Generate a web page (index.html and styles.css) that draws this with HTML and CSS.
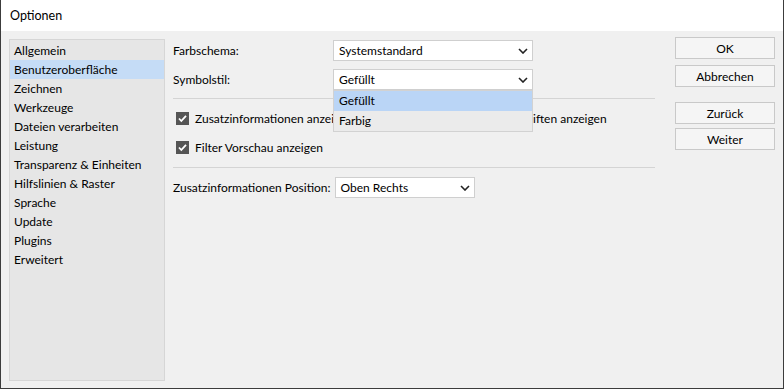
FILE: index.html
```html
<!DOCTYPE html>
<html lang="de">
<head>
  <meta charset="UTF-8" />
  <title>Optionen</title>
  <link rel="stylesheet" href="styles.css">
</head>
<body>
  <div class="window">
    <div class="titlebar">Optionen</div>

    <div class="main">
      <ul class="nav-list">
        <li>Allgemein</li>
        <li class="selected">Benutzeroberfläche</li>
        <li>Zeichnen</li>
        <li>Werkzeuge</li>
        <li>Dateien verarbeiten</li>
        <li>Leistung</li>
        <li>Transparenz &amp; Einheiten</li>
        <li>Hilfslinien &amp; Raster</li>
        <li>Sprache</li>
        <li>Update</li>
        <li>Plugins</li>
        <li>Erweitert</li>
      </ul>

      <div class="content">
        <div class="field-row">
          <span class="label">Farbschema:</span>
          <div class="combo">
            <span>Systemstandard</span>
            <svg class="chevron" width="10" height="6" viewBox="0 0 10 6"><path d="M1 1 L5 5 L9 1" fill="none" stroke="#222" stroke-width="1.6"/></svg>
          </div>
        </div>
        <div class="field-row">
          <span class="label">Symbolstil:</span>
          <div class="combo open">
            <span>Gefüllt</span>
            <svg class="chevron" width="10" height="6" viewBox="0 0 10 6"><path d="M1 1 L5 5 L9 1" fill="none" stroke="#222" stroke-width="1.6"/></svg>
            <ul class="popup">
              <li class="active">Gefüllt</li>
              <li>Farbig</li>
            </ul>
          </div>
        </div>

        <hr class="sep first">

        <label class="check-row">
          <svg class="checkbox" width="13" height="13" viewBox="0 0 13 13"><rect width="13" height="13" fill="#555"/><path d="M3 6.5 L5.3 9 L10 3.8" fill="none" stroke="#fff" stroke-width="1.8"/></svg>
          <span>Zusatzinformationen anzei</span><span class="covered">gen und Objektbeschr</span><span>iften anzeigen</span>
        </label>
        <label class="check-row">
          <svg class="checkbox" width="13" height="13" viewBox="0 0 13 13"><rect width="13" height="13" fill="#555"/><path d="M3 6.5 L5.3 9 L10 3.8" fill="none" stroke="#fff" stroke-width="1.8"/></svg>
          <span>Filter Vorschau anzeigen</span>
        </label>

        <hr class="sep second">

        <div class="field-row position-row">
          <span class="label">Zusatzinformationen Position:</span>
          <div class="combo small">
            <span>Oben Rechts</span>
            <svg class="chevron" width="10" height="6" viewBox="0 0 10 6"><path d="M1 1 L5 5 L9 1" fill="none" stroke="#222" stroke-width="1.6"/></svg>
          </div>
        </div>
      </div>

      <div class="buttons">
        <button>OK</button>
        <button>Abbrechen</button>
        <button class="back">Zurück</button>
        <button class="next">Weiter</button>
      </div>
    </div>
  </div>
</body>
</html>
```

FILE: styles.css
```css
* {
  margin: 0;
  padding: 0;
  box-sizing: border-box;
}

body {
  font-family: Lato, 'Noto Sans', sans-serif;
  font-size: 12px;
  color: #000;
  background: #3a3a3a;
  width: 784px;
  height: 389px;
  overflow: hidden;
}

.window {
  width: 784px;
  height: 389px;
  border: 1px solid #3c3c3c;
  border-top: none;
  display: flex;
  flex-direction: column;
}

.titlebar {
  height: 31px;
  background: #fff;
  padding-left: 9px;
  line-height: 31px;
  font-size: 12.5px;
}

.main {
  flex: 1;
  background: #f0f0f0;
  display: flex;
  padding: 8px 8px 7px 8px;
}

.nav-list {
  list-style: none;
  width: 156px;
  background: #e6e6e6;
  border: 1px solid #d6d6d6;
  padding-top: 1px;
}

.nav-list li {
  height: 19px;
  line-height: 19px;
  padding-left: 4px;
}

.nav-list li.selected {
  background: #c5dcf6;
}

.content {
  width: 482px;
  margin-left: 8px;
  padding-top: 1px;
}

.field-row {
  display: flex;
  align-items: center;
  margin-bottom: 8px;
}

.label {
  width: 160px;
}

.combo {
  position: relative;
  width: 200px;
  height: 21px;
  background: #fff;
  border: 1px solid #cfcfcf;
  display: flex;
  align-items: center;
  justify-content: space-between;
  padding: 0 4px 0 5px;
}

.combo.small {
  width: 140px;
}

.chevron {
  display: block;
}

.popup {
  position: absolute;
  top: 20px;
  left: -1px;
  width: 200px;
  list-style: none;
  background: #ebebeb;
  border: 1px solid #d2d2d2;
  z-index: 2;
}

.popup li {
  height: 20px;
  line-height: 20px;
  padding-left: 5px;
}

.popup li.active {
  background: #bad5f6;
}

.sep {
  border: none;
  border-top: 1px solid #d4d4d4;
}

.sep.first {
  margin: 1px 0 9px;
}

.sep.second {
  margin: 10px 0 9px;
}

.check-row {
  display: flex;
  align-items: center;
  height: 20px;
  padding-left: 3px;
  white-space: nowrap;
}

.check-row + .check-row {
  margin-top: 9px;
}

.checkbox {
  margin-right: 6px;
  flex-shrink: 0;
}

.check-row .covered {
  display: inline-block;
  width: 199px;
  overflow: hidden;
}

.position-row .label {
  width: auto;
  margin-right: 4px;
}

.buttons {
  margin-left: auto;
  width: 100px;
  display: flex;
  flex-direction: column;
  gap: 6px;
}

.buttons button {
  font-family: inherit;
  font-size: 12px;
  height: 22px;
  background: #f5f5f5;
  border: 1px solid #c9c9c9;
  color: #000;
}

.buttons button:first-child {
  margin-top: -2px;
}

.buttons .back {
  margin-top: 9px;
}

.buttons .next {
  margin-top: -2px;
}
```
